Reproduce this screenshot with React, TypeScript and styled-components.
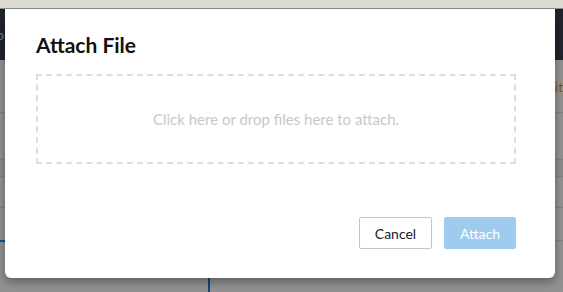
import React from "react";
import styled, { createGlobalStyle } from "styled-components";

const GlobalStyle = createGlobalStyle`
  html, body { margin: 0; padding: 0; width: 563px; height: 292px; overflow: hidden; }
  body { font-family: Lato, "Liberation Sans", sans-serif; }
`;

const App = () => (
  <>
    <GlobalStyle />
    <Screen>
      <BrowserBar />
      <Page>
        <Header>
          <HeaderText>o</HeaderText>
        </Header>
        <Content>
          <Row $height={52}>
            <RowLabel>with</RowLabel>
          </Row>
          <Row $height={46} />
          <Band />
          <Row $height={30} />
          <BlueRow />
          <Rest>
            <Divider />
          </Rest>
        </Content>
        <Backdrop />
        <Modal>
          <Title>Attach File</Title>
          <DropZone>Click here or drop files here to attach.</DropZone>
          <Footer>
            <CancelButton>Cancel</CancelButton>
            <AttachButton disabled>Attach</AttachButton>
          </Footer>
        </Modal>
      </Page>
    </Screen>
  </>
);

export default App;

const Screen = styled.div`
  width: 563px;
  height: 292px;
  display: flex;
  flex-direction: column;
  overflow: hidden;
`;

const BrowserBar = styled.div`
  height: 8px;
  flex-shrink: 0;
  background: #dcd9d2;
  border-bottom: 1px solid #8c8a86;
`;

const Page = styled.div`
  position: relative;
  flex: 1;
  display: flex;
  flex-direction: column;
  background: #fff;
  overflow: hidden;
`;

const Header = styled.div`
  height: 51px;
  flex-shrink: 0;
  background: #37404f;
  display: flex;
  align-items: center;
`;

const HeaderText = styled.span`
  color: #c9d3e6;
  font-size: 14px;
  margin-left: -4px;
`;

const Content = styled.div`
  flex: 1;
  display: flex;
  flex-direction: column;
  background: #fafafa;
`;

const Row = styled.div<{ $height: number }>`
  height: ${(p) => p.$height}px;
  border-bottom: 1px solid #dedede;
  display: flex;
  align-items: center;
  justify-content: flex-end;
`;

const RowLabel = styled.span`
  color: #e39a1d;
  font-size: 14px;
  margin-right: -8px;
`;

const Band = styled.div`
  height: 16px;
  background: #eeeeee;
  border-bottom: 1px solid #dedede;
`;

const BlueRow = styled.div`
  height: 32px;
  border-bottom: 1px solid #dedede;
  position: relative;
  &::after {
    content: "";
    position: absolute;
    left: 0;
    width: 10px;
    bottom: -2px;
    height: 2px;
    background: #2a8bd6;
  }
`;

const Rest = styled.div`
  flex: 1;
  display: flex;
  padding-left: 208px;
`;

const Divider = styled.div`
  width: 2px;
  background: #2a7bc4;
`;

const Backdrop = styled.div`
  position: absolute;
  inset: 0;
  background: rgba(0, 0, 0, 0.42);
`;

const Modal = styled.div`
  position: absolute;
  left: 5px;
  top: -5px;
  width: 550px;
  height: 274px;
  box-sizing: border-box;
  background: #fff;
  border-radius: 6px;
  box-shadow: 0 4px 10px rgba(0, 0, 0, 0.35);
  padding: 27px 39px 29px 31px;
  display: flex;
  flex-direction: column;
`;

const Title = styled.h2`
  margin: 0 0 15px;
  font-size: 21px;
  font-weight: 700;
  line-height: 28px;
  color: #111;
`;

const DropZone = styled.div`
  height: 90px;
  box-sizing: border-box;
  border: 2px dashed #dddddd;
  display: flex;
  align-items: center;
  justify-content: center;
  font-size: 15px;
  color: #c8c8c8;
  cursor: pointer;
`;

const Footer = styled.div`
  margin-top: auto;
  display: flex;
  justify-content: flex-end;
  gap: 12px;
`;

const BaseButton = styled.button`
  height: 32px;
  box-sizing: border-box;
  padding: 0 14px;
  font-family: Lato, "Liberation Sans", sans-serif;
  font-size: 14px;
  border-radius: 2px;
`;

const CancelButton = styled(BaseButton)`
  background: #fff;
  border: 1px solid #c6c6c6;
  color: #222;
  width: 73px;
`;

const AttachButton = styled(BaseButton)`
  background: #9fcbee;
  border: 1px solid #9fcbee;
  color: #fff;
  width: 72px;
`;
